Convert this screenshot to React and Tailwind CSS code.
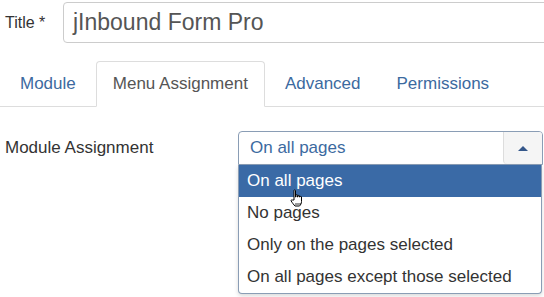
import React from 'react';

const tabs = ['Module', 'Menu Assignment', 'Advanced', 'Permissions'];
const options = ['On all pages', 'No pages', 'Only on the pages selected', 'On all pages except those selected'];

function HandCursor() {
  return (
    <svg width="16" height="19" viewBox="0 0 16 19" className="absolute left-[289px] top-[189px]">
      <path
        d="M5 1.5c0-.8 1.5-.8 1.5 0V8h.5V6.3c0-.8 1.5-.8 1.5 0V8h.5V7c0-.8 1.5-.8 1.5 0v1h.5c0-.8 1.5-.8 1.5 0v4.5c0 2-1 3.5-2 4.5H6c-1-1-3-3.5-3.8-5-.4-.8.4-1.6 1.2-1L5 11V1.5z"
        fill="#fff"
        stroke="#000"
        strokeWidth="1"
        strokeLinejoin="round"
      />
      <path d="M7 14v2M9 14v2M11 14v2" stroke="#000" strokeWidth="0.8" />
    </svg>
  );
}

export default function App() {
  return (
    <div className="relative w-[544px] h-[297px] overflow-hidden bg-white text-[#333]" style={{ fontFamily: '"Liberation Sans", Arial, sans-serif' }}>
      <div className="flex items-center pt-[2px]">
        <label className="w-[63px] shrink-0 pl-[5px] text-[16px] whitespace-nowrap">Title *</label>
        <div className="w-[520px] h-[41px] shrink-0 flex items-center pl-[9px] border border-[#ccc] rounded-[4px] text-[23px] text-[#555]">
          jInbound Form Pro
        </div>
      </div>

      <div className="flex mt-[18px] pl-[4px] gap-[4px] border-b border-[#ddd] h-[46px]">
        {tabs.map((t) => (
          <div
            key={t}
            className={
              t === 'Menu Assignment'
                ? 'flex items-center px-4 border border-[#ddd] border-b-white rounded-t-[4px] -mb-px text-[17px] text-[#555] bg-white whitespace-nowrap'
                : 'flex items-center px-4 text-[17px] text-[#3c6a9f] whitespace-nowrap'
            }
          >
            {t}
          </div>
        ))}
      </div>

      <div className="flex items-center mt-[24px]">
        <label className="w-[238px] shrink-0 pl-[5px] text-[17px]">Module Assignment</label>
        <div className="relative w-[305px] shrink-0 h-[34px]">
          <div className="flex h-full border border-[#8a9db5] rounded-t-[4px] overflow-hidden">
            <div className="flex-1 flex items-center pl-[11px] text-[17px] text-[#3c6a9f]">On all pages</div>
            <div className="w-[39px] flex items-center justify-center bg-[#f5f5f5] border-l border-[#ddd] rounded-bl-[4px]">
              <div className="w-0 h-0 border-l-[5px] border-r-[5px] border-b-[5px] border-l-transparent border-r-transparent border-b-[#34578a]" />
            </div>
          </div>
          <div className="absolute left-0 top-[34px] w-[304px] bg-white border border-[#8a9db5] border-t-0 rounded-b-[4px] shadow-[0_2px_4px_rgba(0,0,0,0.15)]">
            {options.map((o, i) => (
              <div
                key={o}
                className={
                  i === 0
                    ? 'h-[32px] flex items-center pl-[8px] text-[17px] bg-[#3a6aa6] text-white'
                    : 'h-[32px] flex items-center pl-[8px] text-[17px] text-[#333]'
                }
              >
                {o}
              </div>
            ))}
          </div>
        </div>
      </div>

      <HandCursor />
    </div>
  );
}
